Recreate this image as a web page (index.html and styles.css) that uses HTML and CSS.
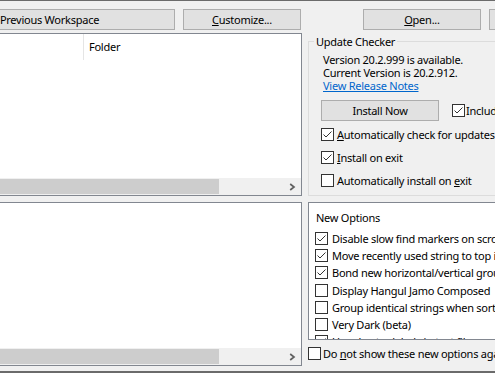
FILE: index.html
```html
<!DOCTYPE html>
<html lang="en">
<head>
    <meta charset="UTF-8">
    <title>Options</title>
    <link rel="stylesheet" href="styles.css">
</head>
<body>
  <div class="window">

    <div class="toolbar">
      <button class="btn btn-wide">Previous Workspace</button>
      <button class="btn"><u>C</u>ustomize...</button>
      <button class="btn btn-open"><u>O</u>pen...</button>
      <button class="btn"></button>
    </div>

    <div class="main">

      <!-- workspace list -->
      <div class="list">
        <div class="list-head">
          <span class="col-name"></span>
          <span class="col-folder">Folder</span>
        </div>
        <div class="list-body"></div>
        <div class="hscroll">
          <div class="thumb"></div>
          <svg class="arrow" width="7" height="8" viewBox="0 0 7 8"><path d="M1.2 1l3.8 3-3.8 3" fill="none" stroke="#606060" stroke-width="1.7"/></svg>
        </div>
      </div>

      <fieldset class="group">
        <legend>Update Checker</legend>
        <p class="info">Version 20.2.999 is available.</p>
        <p class="info">Current Version is 20.2.912.</p>
        <p class="info"><a class="link" href="#">View Release Notes</a></p>

        <div class="install-row">
          <button class="btn btn-install">Install Now</button>
          <label class="check-row include">
            <span class="check"><svg width="11" height="11" viewBox="0 0 11 11"><path d="M1.5 5.5l2.5 2.5 5.5-5.5" fill="none" stroke="#333" stroke-width="1"/></svg></span>Include
          </label>
        </div>

        <label class="check-row upd">
          <span class="check"><svg width="11" height="11" viewBox="0 0 11 11"><path d="M1.5 5.5l2.5 2.5 5.5-5.5" fill="none" stroke="#333" stroke-width="1"/></svg></span><span><u>A</u>utomatically check for updates</span>
        </label>
        <label class="check-row upd">
          <span class="check"><svg width="11" height="11" viewBox="0 0 11 11"><path d="M1.5 5.5l2.5 2.5 5.5-5.5" fill="none" stroke="#333" stroke-width="1"/></svg></span><span><u>I</u>nstall on exit</span>
        </label>
        <label class="check-row upd">
          <span class="check"></span><span>Automatically install on <u>e</u>xit</span>
        </label>
      </fieldset>

      <!-- second list -->
      <div class="list">
        <div class="list-body"></div>
        <div class="hscroll">
          <div class="thumb"></div>
          <svg class="arrow" width="7" height="8" viewBox="0 0 7 8"><path d="M1.2 1l3.8 3-3.8 3" fill="none" stroke="#606060" stroke-width="1.7"/></svg>
        </div>
      </div>

      <div class="options-col">
        <div class="options">
          <div class="opt-title">New Options</div>
          <label class="check-row opt">
            <span class="check"><svg width="11" height="11" viewBox="0 0 11 11"><path d="M1.5 5.5l2.5 2.5 5.5-5.5" fill="none" stroke="#333" stroke-width="1"/></svg></span>Disable slow find markers on scroll
          </label>
          <label class="check-row opt">
            <span class="check"><svg width="11" height="11" viewBox="0 0 11 11"><path d="M1.5 5.5l2.5 2.5 5.5-5.5" fill="none" stroke="#333" stroke-width="1"/></svg></span>Move recently used string to top in list
          </label>
          <label class="check-row opt">
            <span class="check"><svg width="11" height="11" viewBox="0 0 11 11"><path d="M1.5 5.5l2.5 2.5 5.5-5.5" fill="none" stroke="#333" stroke-width="1"/></svg></span>Bond new horizontal/vertical groups
          </label>
          <label class="check-row opt">
            <span class="check"></span>Display Hangul Jamo Composed
          </label>
          <label class="check-row opt">
            <span class="check"></span>Group identical strings when sort by
          </label>
          <label class="check-row opt">
            <span class="check"></span>Very Dark (beta)
          </label>
          <label class="check-row opt">
            <span class="check"><svg width="11" height="11" viewBox="0 0 11 11"><path d="M1.5 5.5l2.5 2.5 5.5-5.5" fill="none" stroke="#333" stroke-width="1"/></svg></span>Use shorter labels in text file results
          </label>
        </div>
        <label class="check-row dont-show">
          <span class="check"></span><span>Do <u>n</u>ot show these new options again</span>
        </label>
      </div>

    </div>
  </div>
</body>
</html>
```

FILE: styles.css
```css
html {
  box-sizing: border-box;
}

*, *:before, *:after {
  box-sizing: inherit;
}

body {
  margin: 0;
  width: 495px;
  height: 373px;
  overflow: hidden;
  background: #f0f0f0;
  font-family: "Noto Sans", sans-serif;
  font-size: 11px;
  letter-spacing: -0.25px;
  color: #000;
}

.window {
  height: 373px;
  border-top: 1px solid #6b6b6b;
  border-bottom: 2px solid #6b6b6b;
}

/* top buttons */
.toolbar {
  display: flex;
  gap: 8px;
  height: 32px;
  padding-top: 8px;
}

.btn {
  flex: none;
  width: 118px;
  height: 21px;
  padding: 0;
  border: 1px solid #adadad;
  background: #e1e1e1;
  font: inherit;
  letter-spacing: inherit;
  line-height: 19px;
  color: #000;
  white-space: nowrap;
}

.btn-wide {
  width: 251px;
  margin-left: -76px;
}

.btn-open {
  margin-left: 54px;
}

.main {
  display: grid;
  grid-template-columns: 302px 250px;
  grid-template-rows: 163px 164px;
  column-gap: 6px;
  row-gap: 6px;
}

/* list panels */
.list {
  display: flex;
  flex-direction: column;
  background: #fff;
  border: 1px solid #828790;
  border-left: 0;
}

.list-head {
  display: flex;
  height: 26px;
  line-height: 26px;
}

.col-name {
  width: 84px;
  border-right: 1px solid #e5e5e5;
}

.col-folder {
  padding-left: 5px;
}

.list-body {
  flex: 1;
}

.hscroll {
  display: flex;
  align-items: center;
  height: 17px;
  background: #f0f0f0;
}

.thumb {
  width: 219px;
  height: 15px;
  background: #cdcdcd;
}

.arrow {
  margin-left: auto;
  margin-right: 5px;
}

/* update checker */
.group {
  margin: 1px 0 0;
  height: 162px;
  padding: 4px 0 0 14px;
  border: 1px solid #dcdcdc;
  min-width: 0;
}

.group legend {
  margin-left: -9px;
  padding: 0 2px;
  line-height: 15px;
}

.info {
  margin: 0;
  height: 13px;
  line-height: 13px;
  white-space: nowrap;
}

.link {
  display: inline-block;
  height: 13px;
  line-height: 13px;
  color: #0066cc;
}

.install-row {
  display: flex;
  align-items: center;
  margin-top: 8px;
}

.btn-install {
  margin-left: -2px;
}

.check-row {
  display: flex;
  align-items: center;
  height: 13px;
  line-height: 13px;
  white-space: nowrap;
}

.check {
  flex: none;
  display: flex;
  align-items: center;
  justify-content: center;
  width: 13px;
  height: 13px;
  margin-right: 3px;
  border: 1px solid #333;
  background: #fff;
}

.include {
  margin-left: 13px;
}

.include .check {
  margin-right: 1px;
}

.upd {
  margin-left: -2px;
  margin-top: 10px;
}

.install-row + .upd {
  margin-top: 7px;
}

/* new options */
.options-col {
  display: flex;
  flex-direction: column;
}

.options {
  height: 138px;
  overflow: hidden;
  padding: 8px 0 0 6px;
  background: #fff;
  border: 1px solid #828790;
  border-right: 0;
}

.opt-title {
  margin: 0 0 6px 1px;
  line-height: 13px;
}

.opt {
  height: 17.2px;
}

.opt .check {
  margin-right: 4px;
}

.dont-show {
  margin-top: 7px;
}

.dont-show .check {
  margin-right: 2px;
}
```
